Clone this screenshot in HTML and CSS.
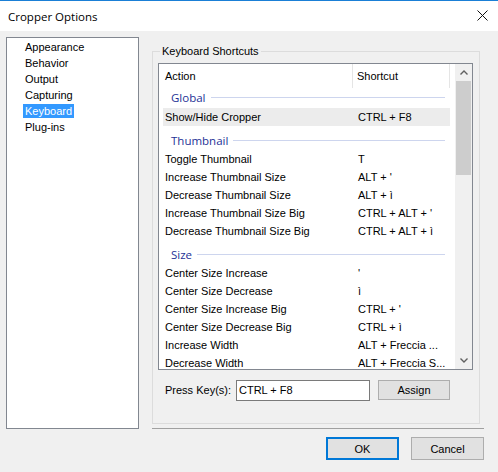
FILE: index.html
```html
<!DOCTYPE html>
<html>
<head>
<meta charset="utf-8">
<link rel="stylesheet" href="styles.css">
</head>
<body>
<div class="window">
  <div class="titlebar">
    <span class="title">Cropper Options</span>
    <svg class="close" width="11" height="11" viewBox="0 0 11 11"><path d="M0.5 0.5 L10.5 10.5 M10.5 0.5 L0.5 10.5" stroke="#111" stroke-width="1" fill="none"/></svg>
  </div>
  <div class="content">
    <ul class="tree">
      <li><span>Appearance</span></li>
      <li><span>Behavior</span></li>
      <li><span>Output</span></li>
      <li><span>Capturing</span></li>
      <li><span class="selected">Keyboard</span></li>
      <li><span>Plug-ins</span></li>
    </ul>
    <div class="right">
      <div class="group">
        <span class="group-label">Keyboard Shortcuts</span>
        <div class="list">
          <div class="list-main">
            <div class="list-head">
              <div class="h-action">Action</div>
              <div class="h-shortcut">Shortcut</div>
            </div>
            <div class="grp grp-first"><span>Global</span><i></i></div>
            <div class="row sel"><span class="c1">Show/Hide Cropper</span><span class="c2">CTRL + F8</span></div>
            <div class="grp"><span>Thumbnail</span><i></i></div>
            <div class="row"><span class="c1">Toggle Thumbnail</span><span class="c2">T</span></div>
            <div class="row"><span class="c1">Increase Thumbnail Size</span><span class="c2">ALT + '</span></div>
            <div class="row"><span class="c1">Decrease Thumbnail Size</span><span class="c2">ALT + ì</span></div>
            <div class="row"><span class="c1">Increase Thumbnail Size Big</span><span class="c2">CTRL + ALT + '</span></div>
            <div class="row"><span class="c1">Decrease Thumbnail Size Big</span><span class="c2">CTRL + ALT + ì</span></div>
            <div class="grp"><span>Size</span><i></i></div>
            <div class="row"><span class="c1">Center Size Increase</span><span class="c2">'</span></div>
            <div class="row"><span class="c1">Center Size Decrease</span><span class="c2">ì</span></div>
            <div class="row"><span class="c1">Center Size Increase Big</span><span class="c2">CTRL + '</span></div>
            <div class="row"><span class="c1">Center Size Decrease Big</span><span class="c2">CTRL + ì</span></div>
            <div class="row"><span class="c1">Increase Width</span><span class="c2">ALT + Freccia ...</span></div>
            <div class="row"><span class="c1">Decrease Width</span><span class="c2">ALT + Freccia S...</span></div>
          </div>
          <div class="scrollbar">
            <div class="arrow"><svg width="8" height="5" viewBox="0 0 8 5"><path d="M0.5 4.5 L4 1 L7.5 4.5" stroke="#606060" stroke-width="1.4" fill="none"/></svg></div>
            <div class="track"><div class="thumb"></div></div>
            <div class="arrow"><svg width="8" height="5" viewBox="0 0 8 5"><path d="M0.5 0.5 L4 4 L7.5 0.5" stroke="#606060" stroke-width="1.4" fill="none"/></svg></div>
          </div>
        </div>
        <div class="keyrow">
          <span class="key-label">Press Key(s):</span>
          <div class="key-input">CTRL + F8</div>
          <button class="btn assign">Assign</button>
        </div>
      </div>
      <div class="sep"></div>
      <div class="buttons">
        <button class="btn ok">OK</button>
        <button class="btn">Cancel</button>
      </div>
    </div>
  </div>
</div>
</body>
</html>
```
FILE: styles.css
```css
* { box-sizing: border-box; }
html, body { margin: 0; padding: 0; }
body {
  width: 498px;
  height: 472px;
  overflow: hidden;
  background: #f0f0f0;
  font-family: "Liberation Sans", Arial, sans-serif;
  font-size: 11px;
  color: #000;
}
.window {
  width: 498px;
  height: 472px;
  border-top: 1px solid #1a7fd6;
  background: #f0f0f0;
}
.titlebar {
  height: 30px;
  background: #fff;
  display: flex;
  align-items: center;
  justify-content: space-between;
  padding: 0 10px 0 8px;
}
.title {
  font-family: "Open Sans", "Noto Sans", sans-serif;
  font-size: 11.5px;
  color: #000;
  margin-top: 1px;
}
.close { display: block; margin-top: -1px; }
.content {
  display: flex;
  padding: 6px 0 0 6px;
}
.tree {
  list-style: none;
  margin: 0;
  padding: 1px 0 0 16px;
  width: 133px;
  height: 392px;
  background: #fff;
  border: 1px solid #828790;
}
.tree li {
  height: 16px;
  display: flex;
  align-items: center;
}
.tree li span {
  display: block;
  height: 14px;
  line-height: 14px;
  padding: 0 2px;
}
.tree li span.selected {
  background: #3399ff;
  color: #fff;
}
.right {
  margin-left: 13px;
  width: 332px;
  padding-top: 14px;
  display: flex;
  flex-direction: column;
}
.group {
  position: relative;
  width: 328px;
  height: 373px;
  border: 1px solid #dcdcdc;
  padding: 11px 0 0 5px;
}
.group-label {
  position: absolute;
  top: -7px;
  left: 7px;
  padding: 0 2px;
  background: #f0f0f0;
  line-height: 13px;
}
.list {
  width: 315px;
  height: 307px;
  border: 1px solid #828790;
  background: #fff;
  display: flex;
}
.list-main {
  flex: 1;
  overflow: hidden;
}
.list-head {
  height: 24px;
  display: flex;
  align-items: stretch;
}
.h-action, .h-shortcut {
  display: flex;
  align-items: center;
  border-right: 1px solid #e5e5e5;
}
.h-action { width: 194px; padding-left: 6px; }
.h-shortcut { width: 97px; padding-left: 4px; }
.grp {
  margin-left: 4px;
  width: 282px;
  height: 24px;
  padding: 5px 0 0 8px;
  display: flex;
  align-items: center;
  font-family: "Open Sans", "Noto Sans", sans-serif;
  font-size: 11.5px;
  color: #1e3296;
}
.grp.grp-first {
  height: 20px;
  padding: 0 0 2px 8px;
}
.grp i {
  flex: 1;
  height: 1px;
  margin-left: 5px;
  background: #cdd5ee;
}
.row {
  margin-left: 4px;
  width: 287px;
  height: 18px;
  line-height: 18px;
  display: flex;
  white-space: nowrap;
}
.row.sel { background: #ececec; }
.c1 { width: 193px; padding-left: 2px; }
.c2 { padding-left: 2px; }
.scrollbar {
  width: 17px;
  background: #f0f0f0;
  display: flex;
  flex-direction: column;
}
.arrow {
  height: 17px;
  display: flex;
  align-items: center;
  justify-content: center;
}
.track { flex: 1; padding: 0 1px; }
.thumb {
  height: 94px;
  background: #cdcdcd;
}
.keyrow {
  margin-top: 10px;
  display: flex;
  align-items: center;
  height: 20px;
  padding-left: 7px;
}
.key-label { width: 71px; }
.key-input {
  width: 134px;
  height: 21px;
  border: 1px solid #7a7a7a;
  background: #fff;
  padding-left: 2px;
  line-height: 19px;
}
.btn {
  font-family: "Liberation Sans", Arial, sans-serif;
  font-size: 11px;
  color: #000;
  background: #e1e1e1;
  border: 1px solid #adadad;
  padding: 0;
  margin: 0;
}
.assign {
  margin-left: 8px;
  width: 72px;
  height: 20px;
}
.sep {
  margin-top: 4px;
  height: 1px;
  background: #a0a0a0;
}
.buttons {
  margin-top: 8px;
  display: flex;
  justify-content: flex-end;
  gap: 12px;
}
.buttons .btn {
  width: 73px;
  height: 23px;
}
.buttons .btn.ok {
  border: 2px solid #0078d7;
}
```
